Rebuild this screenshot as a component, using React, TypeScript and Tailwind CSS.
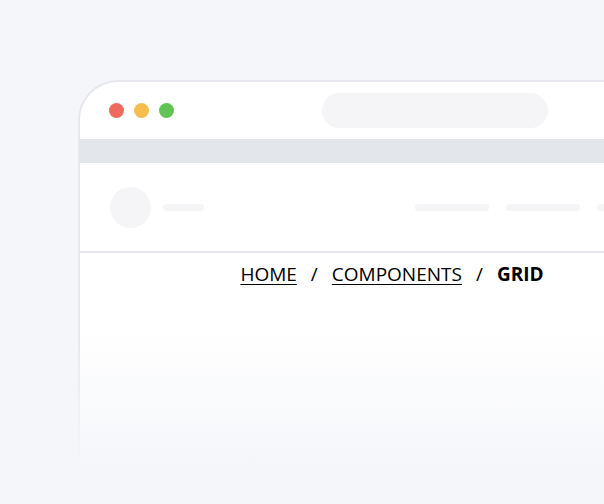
export default function App() {
  return (
    <div className="relative h-[504px] w-[604px] overflow-hidden bg-[#f5f6fa] font-['Open_Sans',sans-serif]">
      <div className="ml-[78px] mt-[80px] w-[626px] h-[440px] rounded-tl-[40px] border-l-2 border-t-2 border-[#e6e8ee] bg-white">
        {/* title bar */}
        <div className="flex h-[57px] items-center pl-[29px]">
          <div className="flex gap-[10px]">
            <span className="h-[15px] w-[15px] rounded-full bg-[#ee6a5e]" />
            <span className="h-[15px] w-[15px] rounded-full bg-[#f6be4f]" />
            <span className="h-[15px] w-[15px] rounded-full bg-[#61c454]" />
          </div>
          <div className="ml-[148px] h-[35px] w-[226px] rounded-full bg-[#f5f5f7]" />
        </div>
        <div className="-ml-[1px] h-[24px] bg-[#e3e6eb]" />
        {/* header */}
        <div className="flex h-[90px] items-center border-b-2 border-[#e6e8ee] pl-[30px]">
          <span className="h-[41px] w-[41px] rounded-full bg-[#f5f5f7]" />
          <span className="ml-[12px] h-[7px] w-[41px] rounded-full bg-[#f5f5f7]" />
          <div className="ml-auto flex gap-[17px] pr-[33px]">
            <span className="h-[7px] w-[74px] rounded-full bg-[#f5f5f7]" />
            <span className="h-[7px] w-[74px] rounded-full bg-[#f5f5f7]" />
            <span className="h-[7px] w-[74px] rounded-full bg-[#f5f5f7]" />
          </div>
        </div>
        {/* breadcrumb */}
        <div className="flex justify-center pt-[9px] text-[19px] leading-[24px] text-black">
          <a className="underline underline-offset-[3px]">HOME</a>
          <span className="mx-[14px]">/</span>
          <a className="underline underline-offset-[3px]">COMPONENTS</a>
          <span className="mx-[14px]">/</span>
          <span className="font-bold">GRID</span>
        </div>
      </div>
      <div className="absolute left-0 right-0 top-[330px] h-[140px] bg-gradient-to-b from-[#f5f6fa00] to-[#f5f6fa]" />
      <div className="absolute left-0 right-0 top-[469px] bottom-0 bg-[#f5f6fa]" />
    </div>
  );
}
